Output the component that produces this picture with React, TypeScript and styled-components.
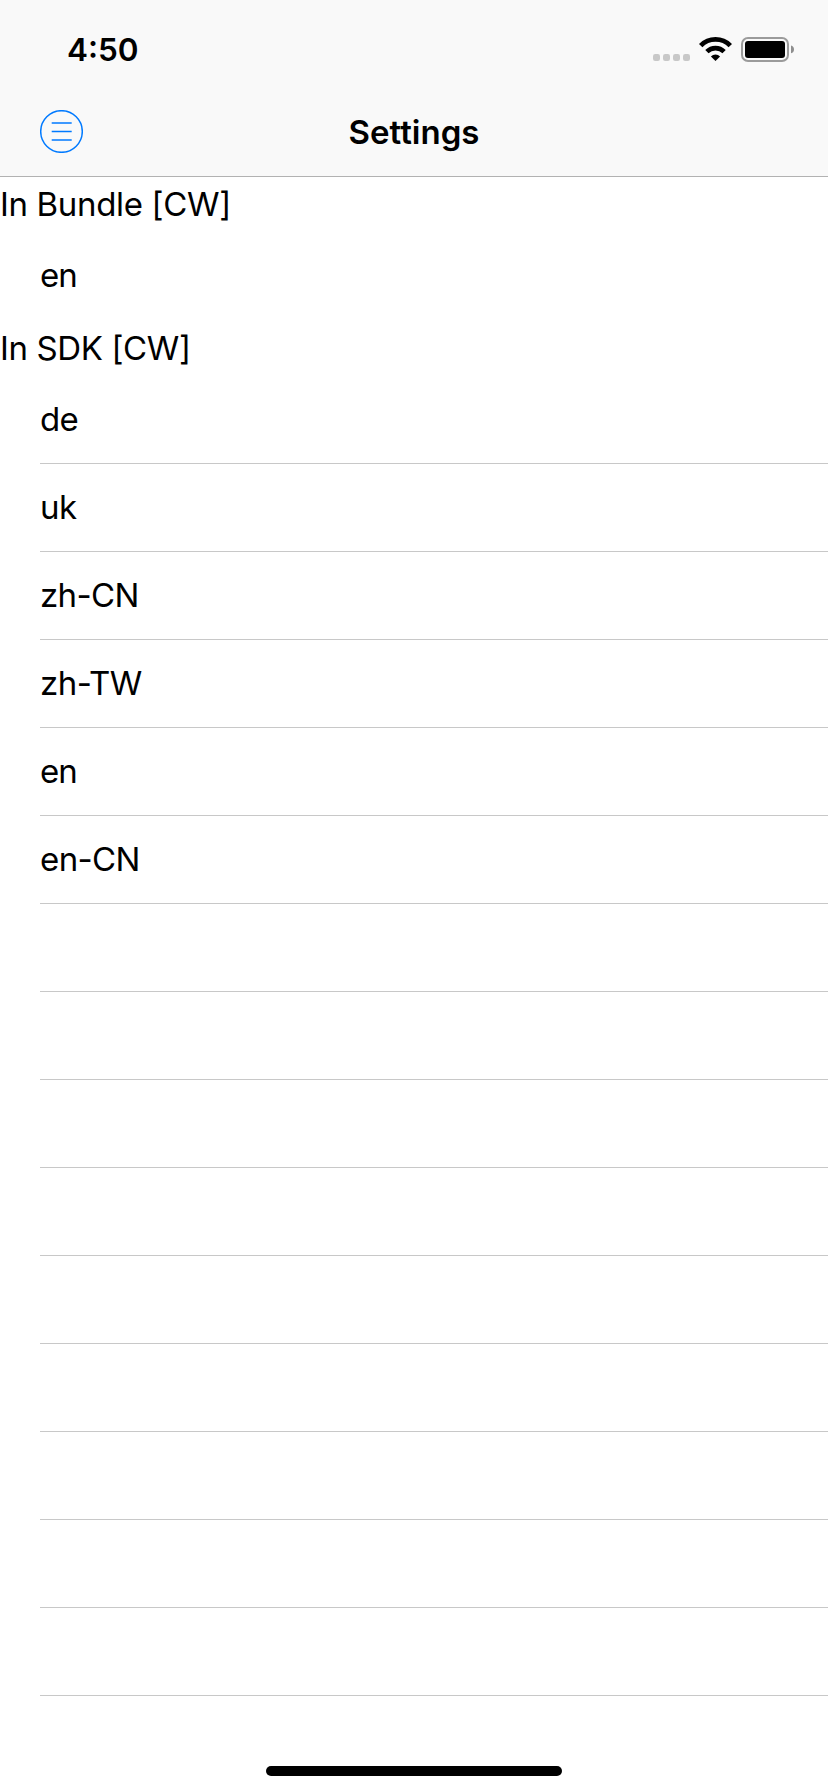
import React from 'react';
import styled, { createGlobalStyle } from 'styled-components';

const GlobalStyle = createGlobalStyle`
  *, *::before, *::after { box-sizing: border-box; }
  body {
    margin: 0;
    background: #fff;
    color: #000;
    font-family: Inter, "Liberation Sans", sans-serif;
  }
`;

const Screen = styled.div`
  position: relative;
  width: 828px;
  height: 1792px;
  overflow: hidden;
  background: #fff;
`;

const Header = styled.header`
  height: 177px;
  background: #f9f9f9;
  border-bottom: 1px solid #b2b2b2;
`;

const StatusBar = styled.div`
  display: flex;
  align-items: flex-start;
  justify-content: space-between;
  height: 88px;
  padding: 30px 34px 0 67px;
`;

const Time = styled.span`
  font-size: 31.5px;
  line-height: 40px;
  font-weight: 600;
  letter-spacing: 0;
`;

const NavBar = styled.nav`
  display: grid;
  grid-template-columns: 1fr auto 1fr;
  align-items: start;
  height: 88px;
  padding: 22px 40px 0;
`;

const MenuButton = styled.button`
  display: block;
  width: 43px;
  height: 43px;
  margin: 0;
  padding: 0;
  border: 0;
  background: none;
  svg { display: block; }
`;

const Title = styled.h1`
  margin: 0;
  font-size: 33px;
  line-height: 44px;
  font-weight: 600;
  letter-spacing: 0;
`;

const SectionHeader = styled.h2<{ $tracking: number }>`
  height: 56px;
  margin: 0;
  font-size: 33px;
  line-height: 56px;
  font-weight: 400;
  letter-spacing: ${(p) => p.$tracking}px;
`;

const List = styled.main`
  margin-top: -1px;
`;

const Row = styled.div<{ $divided: boolean; $tracking?: number }>`
  height: 88px;
  margin-left: 40px;
  border-bottom: 1px solid ${(p) => (p.$divided ? '#c8c8c8' : 'transparent')};
  font-size: 33px;
  line-height: 86px;
  letter-spacing: ${(p) => p.$tracking ?? 0}px;
`;

const HomeIndicator = styled.div`
  position: absolute;
  left: 266px;
  bottom: 16px;
  width: 296px;
  height: 10px;
  border-radius: 5px;
  background: #000;
`;

const StatusIcons = () => (
  <svg width="144" height="32" viewBox="650 30 144 32" overflow="visible">
    <g fill="#c8c8c8">
      {[653, 663, 673, 683].map((x) => (
        <rect key={x} x={x} y="54" width="7" height="7" rx="2.2" />
      ))}
    </g>
    <g fill="none" stroke="#000">
      <path d="M700.7 45.6 A20.8 20.8 0 0 1 730.3 45.6" strokeWidth="4.8" />
      <path d="M706.9 51.7 A12.1 12.1 0 0 1 724.1 51.7" strokeWidth="4.6" />
    </g>
    <path d="M715.5 61 L710.9 56.4 A6.6 6.6 0 0 1 720.1 56.4 Z" />
    <rect x="742" y="38" width="46" height="23" rx="6" fill="none" stroke="#9b9b9b" strokeWidth="2" />
    <rect x="745" y="41" width="40" height="17" rx="3" />
    <path d="M791 45.5 Q794 46.4 794 49.4 Q794 52.4 791 53.3 Z" fill="#8e8e8e" />
  </svg>
);

const MenuIcon = () => (
  <svg width="43" height="43" viewBox="0 0 43 43" fill="none" stroke="#007aff">
    <circle cx="21.5" cy="21.5" r="20.8" strokeWidth="1.5" />
    <path d="M11.7 13H31.7M11.7 21.5H31.7M11.7 30H31.7" strokeWidth="1.5" />
  </svg>
);

const sdkLanguages = [
  { code: 'de', tracking: -0.6 },
  { code: 'uk', tracking: -0.6 },
  { code: 'zh-CN', tracking: -0.6 },
  { code: 'zh-TW', tracking: -0.5 },
  { code: 'en', tracking: -1 },
  { code: 'en-CN', tracking: -0.6 },
];

const EMPTY_ROWS = 9;

export default function App() {
  return (
    <Screen>
      <GlobalStyle />
      <Header>
        <StatusBar>
          <Time>4:50</Time>
          <StatusIcons />
        </StatusBar>
        <NavBar>
          <MenuButton aria-label="Menu">
            <MenuIcon />
          </MenuButton>
          <Title>Settings</Title>
        </NavBar>
      </Header>
      <List>
        <SectionHeader $tracking={-0.34}>In Bundle [CW]</SectionHeader>
        <Row $divided={false} $tracking={-1}>en</Row>
        <SectionHeader $tracking={-0.38}>In SDK [CW]</SectionHeader>
        {sdkLanguages.map(({ code, tracking }) => (
          <Row key={code} $divided $tracking={tracking}>
            {code}
          </Row>
        ))}
        {Array.from({ length: EMPTY_ROWS }, (_, i) => (
          <Row key={i} $divided />
        ))}
      </List>
      <HomeIndicator />
    </Screen>
  );
}
